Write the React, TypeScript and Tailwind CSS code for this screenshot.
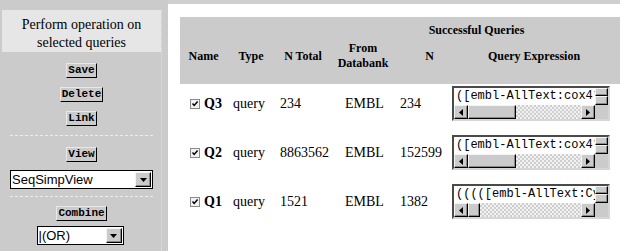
import type { ReactNode } from 'react'

type Query = { name: string; total: string; n: string; expr: string; thumb: number }

const queries: Query[] = [
  { name: 'Q3', total: '234', n: '234', expr: '([embl-AllText:cox4*] & [embl-Division:hum])', thumb: 48 },
  { name: 'Q2', total: '8863562', n: '152599', expr: '([embl-AllText:cox4*] | [embl-Division:*])', thumb: 48 },
  { name: 'Q1', total: '1521', n: '1382', expr: '(((([embl-AllText:Cytochrome] & [embl-AllText:oxidase]) & [embl-AllText:subunit]) & [embl-AllText:IV]) & [embl-Division:hum])', thumb: 12 },
]

function ActionButton({ children }: { children: ReactNode }) {
  return (
    <button className="block h-[15px] px-[1px] bg-[#cbcbcb] border border-t-[#e8e8e8] border-l-[#e8e8e8] border-b-black border-r-black font-['Liberation_Mono',monospace] text-[11px] font-bold leading-[13px] text-black">
      {children}
    </button>
  )
}

function Tri({ dir }: { dir: 'left' | 'right' | 'down' }) {
  const pts = { left: '4,0 0,3.5 4,7', right: '0,0 4,3.5 0,7', down: '0,0 7,0 3.5,4' }[dir]
  const size = dir === 'down' ? { w: 7, h: 4 } : { w: 4, h: 7 }
  return (
    <svg width={size.w} height={size.h} viewBox={`0 0 ${size.w} ${size.h}`} className="block">
      <polygon points={pts} fill="#000" />
    </svg>
  )
}

const raised =
  'bg-[#cbcbcb] border border-t-[#f4f4f4] border-l-[#f4f4f4] border-b-black border-r-black shadow-[inset_-1px_-1px_#8a8a8a]'

function Select({ value, width }: { value: string; width: string }) {
  return (
    <div className={`${width} h-[19px] flex items-center bg-white border border-black pl-[1px]`}>
      <span className="flex-1 font-['Liberation_Sans',sans-serif] text-[13px] leading-[17px] text-black whitespace-nowrap overflow-hidden">
        {value}
      </span>
      <div className={`${raised} w-[16px] h-[15px] mr-[1px] flex items-center justify-center`}>
        <Tri dir="down" />
      </div>
    </div>
  )
}

function Checkbox() {
  return (
    <svg width="10" height="10" viewBox="0 0 10 10" className="block shrink-0">
      <rect x="0.5" y="0.5" width="9" height="9" fill="#f2f2f2" stroke="#8a8a8a" />
      <path d="M2.5 4.5 L4.2 6.4 L7.6 2.6" stroke="#000" strokeWidth="1.5" fill="none" />
    </svg>
  )
}

function ExprBox({ expr, thumb }: { expr: string; thumb: number }) {
  return (
    <div className="w-[158px] h-[35px] flex flex-col border-2 border-t-[#4a4a4a] border-l-[#4a4a4a] border-b-[#d6d6d6] border-r-[#d6d6d6]">
      <div className="flex h-[17px]">
        <div className="flex-1 bg-white overflow-hidden whitespace-nowrap pl-[2px] font-['Liberation_Mono',monospace] text-[12px] leading-[17px] text-black">
          {expr}
        </div>
        <div className="w-[13px] flex flex-col">
          <div className={`${raised} h-[8px]`} />
          <div className={`${raised} h-[9px]`} />
        </div>
      </div>
      <div className="flex h-[14px]">
        <div className={`${raised} w-[14px] flex items-center justify-center`}>
          <Tri dir="left" />
        </div>
        <div className={`${raised}`} style={{ width: thumb }} />
        <div className="flex-1 bg-[repeating-conic-gradient(#cfcfcf_0_25%,#f1f1f1_0_50%)] bg-size-[4px_4px]" />
        <div className={`${raised} w-[14px] flex items-center justify-center`}>
          <Tri dir="right" />
        </div>
        <div className="w-[13px] bg-[#cbcbcb]" />
      </div>
    </div>
  )
}

export default function App() {
  return (
    <div className="w-[620px] h-[251px] overflow-hidden flex bg-white">
      {/* left action panel */}
      <div className="w-[168px] shrink-0 bg-[#cbcbcb] pt-[10px] pl-[2px] pr-[6px]">
        <div className="h-full border-r border-dotted border-[#e4e4e4]">
          <div className="h-[42px] bg-[#e6e6e6] pt-[6px] text-center font-['Liberation_Serif',serif] text-[14px] leading-[18px] text-black">
            Perform operation on
            <br />
            selected queries
          </div>
          <div className="flex flex-col items-center">
            <div className="mt-[11px] flex"><ActionButton>Save</ActionButton></div>
            <div className="mt-[9px] flex"><ActionButton>Delete</ActionButton></div>
            <div className="mt-[9px] flex"><ActionButton>Link</ActionButton></div>
            <div className="mt-[9px] w-[143px] border-t border-dashed border-[#ececec]" />
            <div className="mt-[11px] flex"><ActionButton>View</ActionButton></div>
            <div className="mt-[8px] flex"><Select value="SeqSimpView" width="w-[143px]" /></div>
            <div className="mt-[7px] w-[143px] border-t border-dashed border-[#ececec]" />
            <div className="mt-[9px] flex"><ActionButton>Combine</ActionButton></div>
            <div className="mt-[5px] -ml-[3px] flex"><Select value="|(OR)" width="w-[87px]" /></div>
          </div>
        </div>
      </div>

      {/* query table */}
      <div className="flex-1 min-w-0 overflow-hidden border-t-4 border-[#cfcfcf] pt-[13px] pl-[12px] font-['Liberation_Serif',serif] text-black">
        <div className="w-[640px] bg-[#cbcbcb] pt-[6px] pb-[13px] text-[12px] font-bold">
          <div className="w-[593px] h-[15px] leading-[15px] text-center">Successful Queries</div>
          <div className="mt-[3px] h-[30px] flex items-center text-center leading-[15px]">
            <div className="w-[47px]">Name</div>
            <div className="w-[48px]">Type</div>
            <div className="w-[56px]">N Total</div>
            <div className="w-[64px]">
              From
              <br />
              Databank
            </div>
            <div className="w-[69px]">N</div>
            <div className="w-[140px]">Query Expression</div>
          </div>
        </div>

        {queries.map(q => (
          <div key={q.name} className="flex items-center pt-[2px] pb-[12px] pl-[10px] text-[14px] leading-[16px]">
            <Checkbox />
            <div className="w-[29px] ml-[4px] font-bold">{q.name}</div>
            <div className="w-[47px]">query</div>
            <div className="w-[65px]">{q.total}</div>
            <div className="w-[55px]">EMBL</div>
            <div className="w-[52px]">{q.n}</div>
            <ExprBox expr={q.expr} thumb={q.thumb} />
          </div>
        ))}
      </div>
    </div>
  )
}
